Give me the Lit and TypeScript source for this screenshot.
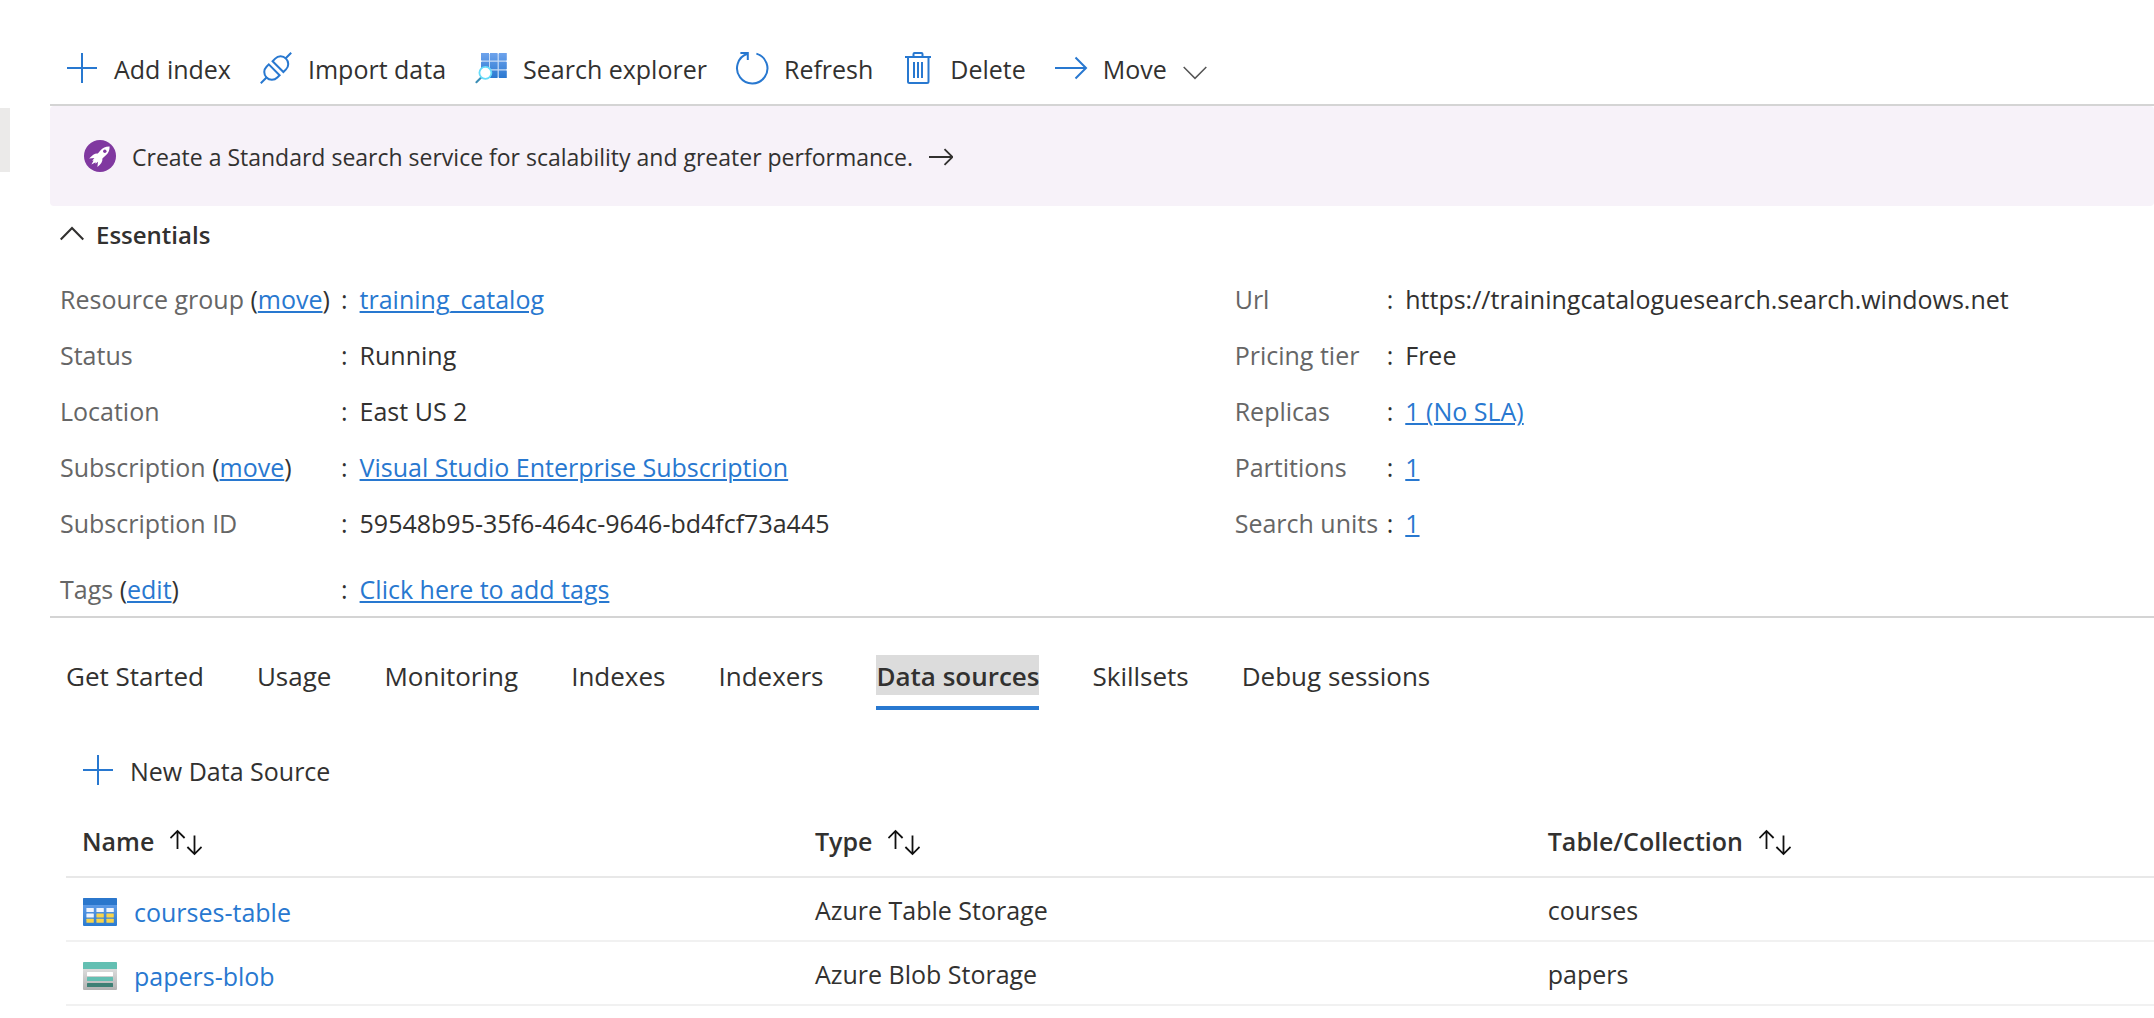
import { LitElement, html, svg, css, nothing, type TemplateResult } from "lit";
import { customElement, state } from "lit/decorators.js";
import { classMap } from "lit/directives/class-map.js";

const plusIcon = html`<svg class="icon stroke" viewBox="0 0 32 32" aria-hidden="true">
  <path d="M16 1v30M1 16h30" />
</svg>`;

const plugIcon = html`<svg class="icon stroke" viewBox="0 0 32 32" aria-hidden="true">
  <path d="M0.8 31.2 7 25M25.2 6.8 31.2 0.8" />
  <path d="M8.8 12.4 19.6 23.2 17.3 25.5A7.6 7.6 0 0 1 6.5 14.7Z" />
  <path d="M12.6 9.2 23.4 20 26 17.4A7.6 7.6 0 0 0 15.2 6.6Z" />
</svg>`;

const explorerIcon = html`<svg class="icon" viewBox="0 0 32 32" aria-hidden="true">
  <defs>
    <linearGradient id="grid-fill" x1="0" y1="1" x2="0" y2="26" gradientUnits="userSpaceOnUse">
      <stop offset="0" stop-color="#6ea3ec" />
      <stop offset="1" stop-color="#2a78d0" />
    </linearGradient>
  </defs>
  <path fill="#c8dcf6" d="M7 2h24v23H7z" />
  <path
    fill="url(#grid-fill)"
    d="M6 1h8v7.6H6zM15 1h7.6v7.6H15zM23.8 1h8v7.6h-8zM6 9.8h8v7.4H6zM15 9.8h7.6v7.4H15zM23.8 9.8h8v7.4h-8zM6 18.4h8V26H6zM15 18.4h7.6V26H15zM23.8 18.4h8V26h-8z"
  />
  <path d="M1.4 30.2 6.4 25.2" stroke="#3a8db5" stroke-width="2" stroke-linecap="round" />
  <circle cx="10.4" cy="20.8" r="6" fill="#fff" stroke="#66dcfa" stroke-width="1.8" />
</svg>`;

const refreshIcon = html`<svg class="icon stroke" viewBox="0 0 32 32" aria-hidden="true">
  <path d="M20.4 1.6A15.2 15.2 0 1 1 11.4 1.8M4.4 1h7.4v7" />
</svg>`;

const deleteIcon = html`<svg class="icon stroke" viewBox="0 0 32 32" aria-hidden="true">
  <path d="M3 5h26M11.5 5V2q0-1 1-1h7q1 0 1 1v3M6 5v24.5q0 1.500 1.500 1.500h17.500q1.500 0 1.500-1.500V5" />
  <path d="M12 10v16M16 10v16M20 10v16" />
</svg>`;

const moveIcon = html`<svg class="icon stroke" viewBox="0 0 32 32" aria-hidden="true">
  <path d="M0 16h31M20.500 5.500 31 16 20.500 26.500" />
</svg>`;

const chevronDown = html`<svg class="chevron thin" viewBox="0 0 24 32" aria-hidden="true">
  <path d="M0.700 15 12 26.400 23.300 15" />
</svg>`;

const chevronUp = html`<svg class="chevron" viewBox="0 0 24 32" aria-hidden="true">
  <path d="M0.700 21.500 12 10 23.300 21.500" />
</svg>`;

const rocketIcon = html`<svg class="icon" viewBox="0 0 32 32" aria-hidden="true">
  <circle cx="16" cy="16" r="16" fill="#8038a0" />
  <path
    fill="#fff"
    d="M25.600 6.400C22 6.200 18.800 7.600 16.400 10.400L13.800 13.600C11 13.200 8.400 15 5.200 18.600L10.400 18 8.200 20.800 9.600 20.600 7.400 24.600 11.600 22.200 11.400 23.800 14 21.800 13.400 27C16.800 24.400 18.800 21.600 18.400 18.400L21.600 15.600C24.400 13.200 25.800 10 25.600 6.400Z"
  />
  <circle cx="20.800" cy="11.200" r="1.700" fill="#8038a0" />
</svg>`;

const arrowRight = html`<svg class="arrow" viewBox="0 0 24 34" aria-hidden="true">
  <path d="M0 17h23.500M15.500 9.200 23.500 17 15.500 24.800" />
</svg>`;

const sortIcon = html`<svg class="sort" viewBox="0 -4 32 30" aria-hidden="true">
  <path d="M7.500 19V0.800M0.400 8 7.500 0.900 14.600 8M24.500 5.500v18.700M17.400 17l7.100 7.100 7.100-7.100" />
</svg>`;

const cell = (x: number, y: number, fill: string) =>
  svg`<rect x=${x} y=${y} width="7.4" height="4" rx="0.5" fill=${fill} />`;

const tableIcon = html`<svg class="source-icon" viewBox="0 0 36 28" aria-hidden="true">
  <defs>
    <linearGradient id="table-fill" x1="0" y1="0" x2="0" y2="1">
      <stop offset="0" stop-color="#6fa5ee" />
      <stop offset="1" stop-color="#2b7bd0" />
    </linearGradient>
  </defs>
  <rect x="1" width="34" height="28" rx="1" fill="url(#table-fill)" />
  <path fill="#2b77cc" d="M2 0h32q1 0 1 1v6H1V1q0-1 1-1z" />
  ${[4.4, 14.4, 24.4].map((x, i) => [
    cell(x, 10, "#f0f4fc"),
    cell(x, 15.4, i === 0 ? "#f0f4fc" : "#f8d34a"),
    cell(x, 20.8, "#f8d34a"),
  ])}
</svg>`;

const blobIcon = html`<svg class="source-icon" viewBox="0 0 36 28" aria-hidden="true">
  <defs>
    <linearGradient id="blob-fill" x1="0" y1="0" x2="0" y2="1">
      <stop offset="0.2" stop-color="#dedede" />
      <stop offset="1" stop-color="#b2b2b2" />
    </linearGradient>
  </defs>
  <rect x="1" width="34" height="28" rx="1" fill="url(#blob-fill)" />
  <path fill="#63bfb2" d="M2 0h32q1 0 1 1v6H1V1q0-1 1-1z" />
  <rect x="5" y="10" width="26" height="4" rx="0.5" fill="#fff" />
  <rect x="5" y="15" width="26" height="4" rx="0.5" fill="#63bfb2" />
  <rect x="5" y="21" width="26" height="4" rx="0.5" fill="#3e8075" />
</svg>`;

interface Command {
  label: string;
  icon: TemplateResult;
  menu?: boolean;
}

interface Property {
  label: string;
  action?: string;
  value: string;
  link?: boolean;
  spaced?: boolean;
}

interface DataSource {
  name: string;
  icon: TemplateResult;
  type: string;
  collection: string;
}

const commands: Command[] = [
  { label: "Add index", icon: plusIcon },
  { label: "Import data", icon: plugIcon },
  { label: "Search explorer", icon: explorerIcon },
  { label: "Refresh", icon: refreshIcon },
  { label: "Delete", icon: deleteIcon },
  { label: "Move", icon: moveIcon, menu: true },
];

const serviceProperties: Property[] = [
  { label: "Resource group", action: "move", value: "training_catalog", link: true },
  { label: "Status", value: "Running" },
  { label: "Location", value: "East US 2" },
  { label: "Subscription", action: "move", value: "Visual Studio Enterprise Subscription", link: true },
  { label: "Subscription ID", value: "59548b95-35f6-464c-9646-bd4fcf73a445" },
  { label: "Tags", action: "edit", value: "Click here to add tags", link: true, spaced: true },
];

const capacityProperties: Property[] = [
  { label: "Url", value: "https://trainingcataloguesearch.search.windows.net" },
  { label: "Pricing tier", value: "Free" },
  { label: "Replicas", value: "1 (No SLA)", link: true },
  { label: "Partitions", value: "1", link: true },
  { label: "Search units", value: "1", link: true },
];

const tabs = [
  "Get Started",
  "Usage",
  "Monitoring",
  "Indexes",
  "Indexers",
  "Data sources",
  "Skillsets",
  "Debug sessions",
];

const sources: DataSource[] = [
  { name: "courses-table", icon: tableIcon, type: "Azure Table Storage", collection: "courses" },
  { name: "papers-blob", icon: blobIcon, type: "Azure Blob Storage", collection: "papers" },
];

@customElement("app-root")
export class AppRoot extends LitElement {
  @state() private activeTab = "Data sources";
  @state() private expanded = true;

  static styles = css`
    :host {
      display: block;
      background: #fff;
      color: #323130;
      font-family: "Open Sans", "Noto Sans", sans-serif;
      font-size: 25px;
      line-height: 34px;
      --accent: #2878d0;
    }
    .shell {
      display: grid;
      grid-template-columns: 50px minmax(0, 1fr);
    }
    .rail {
      padding-top: 108px;
    }
    .rail-handle {
      width: 10px;
      height: 64px;
      background: #ebeae9;
    }
    button {
      font: inherit;
      color: inherit;
      background: none;
      border: 0;
      margin: 0;
      padding: 0;
      cursor: pointer;
      white-space: nowrap;
    }
    a {
      color: var(--accent);
      text-decoration-thickness: 2px;
      text-underline-offset: 2px;
    }
    svg {
      flex: none;
      fill: none;
    }
    .icon {
      width: 32px;
      height: 32px;
      overflow: visible;
    }
    .stroke {
      stroke: var(--accent);
      stroke-width: 2;
    }
    .chevron {
      width: 24px;
      height: 32px;
      stroke: #323130;
      stroke-width: 2.2;
    }
    .thin {
      stroke: #555;
      stroke-width: 1.5;
    }
    .command {
      display: flex;
      align-items: flex-start;
      gap: 16px;
    }
    .toolbar {
      display: flex;
      gap: 29px;
      padding: 52px 16px 18px;
      border-bottom: 2px solid #d4d4d4;
    }
    .banner {
      display: flex;
      align-items: flex-start;
      gap: 16px;
      padding: 34px 34px 32px;
      border-radius: 4px;
      background: #f7f2f9;
      color: #323130;
      font-size: 23px;
      text-decoration: none;
    }
    .arrow {
      width: 24px;
      height: 34px;
      stroke: #323130;
      stroke-width: 1.8;
    }
    .essentials {
      padding: 12px 10px 10px;
      border-bottom: 2px solid #d4d4d4;
    }
    .essentials-title {
      margin: 0;
      font-size: 24px;
      font-weight: 600;
    }
    .essentials-toggle {
      display: flex;
      align-items: flex-start;
      gap: 12px;
    }
    .property-columns {
      display: grid;
      grid-template-columns: 23fr 18fr;
      align-items: start;
      padding-top: 30px;
      margin-right: -10px;
    }
    .properties {
      display: grid;
      gap: 22px;
      margin: 0;
    }
    .property {
      display: grid;
      grid-template-columns: 281px minmax(0, 1fr);
    }
    .compact .property {
      grid-template-columns: 152px minmax(0, 1fr);
    }
    .spaced {
      margin-top: 10px;
    }
    .label-text {
      color: #666;
    }
    .property-value {
      display: flex;
      gap: 12px;
      margin: 0;
    }
    .tabs {
      display: flex;
      gap: 53px;
      padding: 37px 16px 0;
      font-size: 26px;
      line-height: 38px;
    }
    .tab {
      padding-bottom: 11px;
      border-bottom: 4px solid transparent;
    }
    .tab-label {
      display: block;
      padding-top: 2px;
    }
    .selected {
      border-bottom-color: var(--accent);
      font-weight: 600;
    }
    .selected .tab-label {
      background: #dcdcdc;
    }
    .panel {
      padding: 44px 0 0 16px;
    }
    .panel .command {
      margin-left: 16px;
    }
    .sources {
      width: 100%;
      margin-top: 20px;
      border-spacing: 0;
      table-layout: fixed;
      text-align: left;
    }
    .sources th {
      box-sizing: border-box;
      width: 35.1%;
      padding: 16px 16px 18px;
      border-bottom: 2px solid #e8e8e8;
      font-weight: 600;
    }
    .sources th:last-child {
      width: auto;
    }
    .sources td {
      padding: 15px 16px 13px;
      border-bottom: 2px solid #f1f1f1;
      vertical-align: top;
    }
    .sources .name-cell {
      padding-bottom: 9px;
    }
    .sort-button {
      display: flex;
      align-items: center;
      gap: 16px;
      font-weight: 600;
    }
    .sort {
      width: 32px;
      height: 30px;
      stroke: #111;
      stroke-width: 1.8;
    }
    .source-link {
      display: flex;
      align-items: center;
      gap: 16px;
      line-height: 38px;
      text-decoration: none;
    }
    .source-icon {
      width: 36px;
      height: 28px;
    }
  `;

  private renderProperty(p: Property) {
    return html`<div class=${classMap({ property: true, spaced: !!p.spaced })}>
      <dt>
        <span class="label-text">${p.label}</span>${p.action
          ? html` (<a href="#${p.action}">${p.action}</a>)`
          : nothing}
      </dt>
      <dd class="property-value">
        <span>:</span>
        ${p.link ? html`<a href="#">${p.value}</a>` : html`<span>${p.value}</span>`}
      </dd>
    </div>`;
  }

  render() {
    return html`<div class="shell">
      <div class="rail"><div class="rail-handle"></div></div>
      <main>
        <div class="toolbar" role="toolbar">
          ${commands.map(
            (c) => html`<button class="command" type="button">
              ${c.icon}<span>${c.label}</span>${c.menu ? chevronDown : nothing}
            </button>`,
          )}
        </div>
        <a class="banner" href="#upgrade">
          ${rocketIcon}
          <span>Create a Standard search service for scalability and greater performance.</span>
          ${arrowRight}
        </a>
        <section class="essentials">
          <h2 class="essentials-title">
            <button
              class="essentials-toggle"
              type="button"
              aria-expanded=${this.expanded ? "true" : "false"}
              @click=${() => (this.expanded = !this.expanded)}
            >
              ${this.expanded ? chevronUp : chevronDown}<span>Essentials</span>
            </button>
          </h2>
          ${this.expanded
            ? html`<div class="property-columns">
                <dl class="properties">${serviceProperties.map((p) => this.renderProperty(p))}</dl>
                <dl class="properties compact">
                  ${capacityProperties.map((p) => this.renderProperty(p))}
                </dl>
              </div>`
            : nothing}
        </section>
        <div class="tabs" role="tablist">
          ${tabs.map(
            (t) => html`<button
              class=${classMap({ tab: true, selected: t === this.activeTab })}
              type="button"
              role="tab"
              aria-selected=${t === this.activeTab ? "true" : "false"}
              @click=${() => (this.activeTab = t)}
            >
              <span class="tab-label">${t}</span>
            </button>`,
          )}
        </div>
        <section class="panel">
          <button class="command" type="button">${plusIcon}<span>New Data Source</span></button>
          <table class="sources">
            <thead>
              <tr>
                ${["Name", "Type", "Table/Collection"].map(
                  (h) => html`<th scope="col">
                    <button class="sort-button" type="button"><span>${h}</span>${sortIcon}</button>
                  </th>`,
                )}
              </tr>
            </thead>
            <tbody>
              ${sources.map(
                (s) => html`<tr>
                  <td class="name-cell">
                    <a class="source-link" href="#${s.name}">${s.icon}<span>${s.name}</span></a>
                  </td>
                  <td>${s.type}</td>
                  <td>${s.collection}</td>
                </tr>`,
              )}
            </tbody>
          </table>
        </section>
      </main>
    </div>`;
  }
}
